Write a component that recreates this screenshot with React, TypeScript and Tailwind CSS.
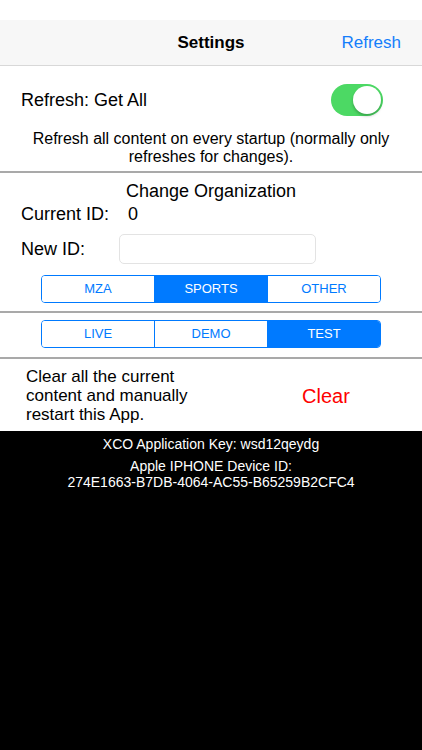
import { useState } from "react";

const font = { fontFamily: '"Liberation Sans", Arial, sans-serif' };

function Segmented({
  items,
  value,
  onChange,
}: {
  items: string[];
  value: number;
  onChange: (i: number) => void;
}) {
  return (
    <div className="mx-[41px] flex h-[28px] overflow-hidden rounded-[4px] border border-[#007aff]">
      {items.map((label, i) => (
        <button
          key={label}
          onClick={() => onChange(i)}
          className={
            "flex flex-1 items-center justify-center text-[13px] " +
            (i > 0 ? "border-l border-[#007aff] " : "") +
            (i === value ? "bg-[#007aff] text-white" : "bg-white text-[#007aff]")
          }
        >
          {label}
        </button>
      ))}
    </div>
  );
}

export default function App() {
  const [getAll, setGetAll] = useState(true);
  const [org, setOrg] = useState(1);
  const [env, setEnv] = useState(2);
  const [newId, setNewId] = useState("");

  return (
    <div className="flex min-h-[750px] flex-col bg-black text-black" style={font}>
      <div className="bg-white">
        {/* status bar */}
        <div className="h-[20px] bg-white" />

        {/* nav bar */}
        <div className="relative flex h-[46px] items-center justify-center border-b border-[#d8d8d8] bg-[#f7f7f7]">
          <span className="text-[17px] font-semibold">Settings</span>
          <button className="absolute right-[21px] text-[17px] text-[#147efb]">Refresh</button>
        </div>

        {/* get all toggle */}
        <div className="flex items-center justify-between pl-[21px] pr-[39px] pt-[18px]">
          <span className="text-[18px]">Refresh: Get All</span>
          <button
            onClick={() => setGetAll(!getAll)}
            className={
              "flex h-[32px] w-[52px] items-center rounded-full p-[2px] " +
              (getAll ? "justify-end bg-[#4cd964]" : "justify-start bg-[#e5e5ea]")
            }
          >
            <span className="h-[28px] w-[28px] rounded-full bg-white shadow-[0_2px_3px_rgba(0,0,0,0.25)]" />
          </button>
        </div>
        <p className="px-[26px] pt-[14px] text-center text-[16px] leading-[18px]">
          Refresh all content on every startup (normally only refreshes for changes).
        </p>
        <div className="mt-[5px] h-[2px] bg-[#a9a9a9]" />

        {/* change organization */}
        <div className="pt-[7px] text-center text-[18px] leading-[22px]">Change Organization</div>
        <div className="mt-[1px] flex items-center pl-[21px] text-[18px] leading-[22px]">
          <span className="w-[107px]">Current ID:</span>
          <span>0</span>
        </div>
        <div className="mt-[9px] flex items-center pl-[21px] text-[18px]">
          <span className="w-[98px]">New ID:</span>
          <input
            value={newId}
            onChange={(e) => setNewId(e.target.value)}
            className="h-[30px] w-[197px] rounded-[5px] border border-[#e3e3e3] px-2 text-[15px] outline-none"
          />
        </div>
        <div className="pt-[11px]">
          <Segmented items={["MZA", "SPORTS", "OTHER"]} value={org} onChange={setOrg} />
        </div>
        <div className="mt-[8px] h-[2px] bg-[#a9a9a9]" />
        <div className="pt-[7px]">
          <Segmented items={["LIVE", "DEMO", "TEST"]} value={env} onChange={setEnv} />
        </div>
        <div className="mt-[9px] h-[2px] bg-[#a9a9a9]" />

        {/* clear */}
        <div className="flex items-center pb-[7px] pl-[26px] pt-[8px]">
          <p className="w-[170px] text-[17px] leading-[19px]">
            Clear all the current content and manually restart this App.
          </p>
          <button className="ml-[106px] text-[20px] text-[#fe0000]">Clear</button>
        </div>
      </div>

      {/* device info */}
      <div className="pt-[5px] text-center text-[14px] text-white">
        <div className="leading-[17px]">XCO Application Key: wsd12qeydg</div>
        <div className="mt-[5px] leading-[16px]">Apple IPHONE Device ID:</div>
        <div className="leading-[16px]">274E1663-B7DB-4064-AC55-B65259B2CFC4</div>
      </div>
    </div>
  );
}
